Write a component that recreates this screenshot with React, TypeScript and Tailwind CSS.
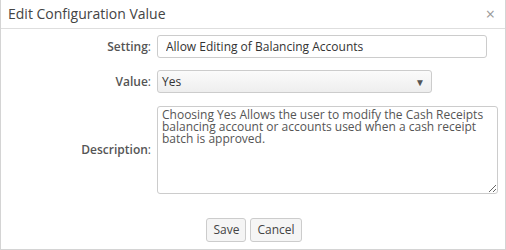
const font = "font-['Open_Sans','Liberation_Sans',sans-serif]";

const description =
  "Choosing Yes Allows the user to modify the Cash Receipts\nbalancing account or accounts used when a cash receipt\nbatch is approved.";

export default function App() {
  return (
    <div className={`w-[506px] h-[250px] bg-white border border-t-0 border-[#d4d4d4] flex flex-col text-[#333] ${font}`}>
      {/* header */}
      <div className="h-[29px] flex items-center justify-between border-b border-[#dedede] pl-[7px] pr-[10px]">
        <span className="text-[14px] text-[#444] leading-none">Edit Configuration Value</span>
        <span className="text-[#999] text-[16px] leading-none">×</span>
      </div>

      {/* form */}
      <div className="flex flex-col pt-[6px]">
        <div className="flex items-center h-[23px]">
          <label className="w-[156px] pr-[6px] text-right text-[12px] font-semibold text-[#555]">
            Setting<span className="font-normal">:</span>
          </label>
          <input
            readOnly
            value="Allow Editing of Balancing Accounts"
            className="w-[330px] h-[23px] border border-[#ccc] rounded-[3px] px-[8px] text-[12px] text-[#333] outline-none"
          />
        </div>

        <div className="flex items-center h-[23px] mt-[12px]">
          <label className="w-[156px] pr-[6px] text-right text-[12px] font-semibold text-[#555]">
            Value<span className="font-normal">:</span>
          </label>
          <div className="w-[275px] h-[23px] border border-[#ccc] rounded-[3px] bg-gradient-to-b from-[#fbfbfb] to-[#eeeeee] flex items-center justify-between pl-[4px] pr-[6px]">
            <span className="text-[12px] text-[#333]">Yes</span>
            <span className="text-[10px] text-[#555] leading-none">▼</span>
          </div>
        </div>

        <div className="flex items-center h-[88px] mt-[13px]">
          <label className="w-[156px] pr-[6px] text-right text-[12px] font-semibold text-[#555]">
            Description<span className="font-normal">:</span>
          </label>
          <textarea
            readOnly
            defaultValue={description}
            className="w-[341px] h-[88px] border border-[#ccc] rounded-[3px] px-[4px] py-[2px] text-[12px] leading-[12px] text-[#555] outline-none resize-y"
          />
        </div>
      </div>

      {/* buttons */}
      <div className="flex justify-center gap-[4px] mt-[24px] pl-[2px]">
        <button className="h-[24px] px-[6px] border border-[#ccc] rounded-[3px] bg-[#f5f5f5] text-[12px] text-[#444]">Save</button>
        <button className="h-[24px] px-[6px] border border-[#ccc] rounded-[3px] bg-[#f5f5f5] text-[12px] text-[#444]">Cancel</button>
      </div>
    </div>
  );
}
